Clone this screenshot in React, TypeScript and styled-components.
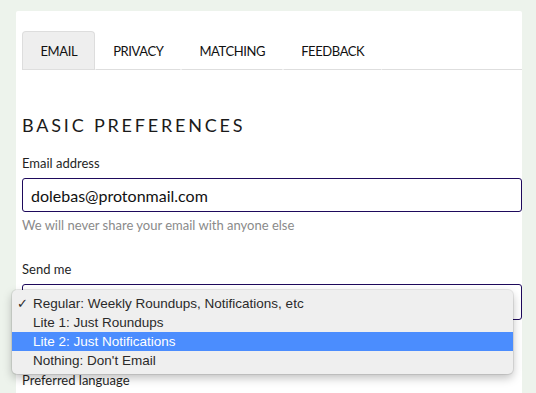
import React from "react";
import styled, { createGlobalStyle } from "styled-components";

const GlobalStyle = createGlobalStyle`
  html, body {
    margin: 0;
    padding: 0;
    background: #edf3ec;
    overflow: hidden;
  }
  body {
    font-family: Lato, "Open Sans", sans-serif;
    color: #1f1f1f;
  }
`;

const tabs = ["Email", "Privacy", "Matching", "Feedback"];
const sendOptions = [
  "Regular: Weekly Roundups, Notifications, etc",
  "Lite 1: Just Roundups",
  "Lite 2: Just Notifications",
  "Nothing: Don't Email",
];

function App() {
  const selected = 0;
  const hovered = 2;

  return (
    <>
      <GlobalStyle />
      <Styled_page_div>
        <Styled_card_section>
          <Styled_tabs_nav>
            {tabs.map((eachTab, index) => (
              <Styled_tab_button key={eachTab} $active={index === 0}>
                {eachTab}
              </Styled_tab_button>
            ))}
          </Styled_tabs_nav>

          <Styled_heading_h2>Basic Preferences</Styled_heading_h2>

          <Styled_field_div>
            <label>Email address</label>
            <Styled_input defaultValue="dolebas@protonmail.com" />
            <small>We will never share your email with anyone else</small>
          </Styled_field_div>

          <Styled_field_div className="send_me">
            <label>Send me</label>
            <Styled_select_div>
              <Styled_menu_ul>
                {sendOptions.map((eachOption, index) => (
                  <Styled_option_li key={eachOption} $highlighted={index === hovered}>
                    <span className="check">{index === selected ? "✓" : ""}</span>
                    {eachOption}
                  </Styled_option_li>
                ))}
              </Styled_menu_ul>
            </Styled_select_div>
          </Styled_field_div>

          <Styled_field_div className="language">
            <label>Preferred language</label>
          </Styled_field_div>
        </Styled_card_section>
      </Styled_page_div>
    </>
  );
}

const Styled_page_div = styled.div`
  padding: 11px 14px 0 16px;
  height: 393px;
  box-sizing: border-box;
`;

const Styled_card_section = styled.section`
  background: #ffffff;
  border-radius: 2px 2px 0 0;
  padding: 20px 0 40px 6px;
  height: 100%;
  box-sizing: border-box;
`;

const Styled_tabs_nav = styled.nav`
  display: flex;
  border-bottom: 1px solid #dedede;
`;

const Styled_tab_button = styled.button<{ $active: boolean }>`
  height: 39px;
  padding: 0 16.5px 0 17.5px;
  margin-bottom: -1px;
  border: 1px solid ${(p) => (p.$active ? "#dddddd" : "transparent")};
  border-bottom: 1px solid #dedede;
  border-radius: 4px 4px 0 0;
  background: ${(p) => (p.$active ? "#eeeeee" : "#ffffff")};
  font-family: Lato, sans-serif;
  font-size: 13px;
  letter-spacing: -0.4px;
  text-transform: uppercase;
  color: #111;
  cursor: pointer;
`;

const Styled_heading_h2 = styled.h2`
  margin: 43px 0 0;
  font-size: 18px;
  font-weight: 400;
  letter-spacing: 2.8px;
  text-transform: uppercase;
  line-height: 24px;
  color: #1a1a1a;
`;

const Styled_field_div = styled.div`
  display: flex;
  flex-direction: column;
  margin-top: 17px;

  & > label {
    font-size: 13px;
    line-height: 18px;
    color: #1f1f1f;
    margin-bottom: 6px;
  }
  & > small {
    margin-top: 5px;
    font-size: 13px;
    line-height: 16px;
    color: #8a8a8a;
  }
  &.send_me {
    margin-top: 27px;
  }
  &.language {
    margin-top: 51px;
  }
`;

const Styled_input = styled.input`
  height: 34px;
  box-sizing: border-box;
  border: 1px solid #1e0a5c;
  border-radius: 3px;
  padding: 0 8px;
  font-family: Lato, sans-serif;
  font-size: 16px;
  color: #111;
  outline: none;
`;

const Styled_select_div = styled.div`
  position: relative;
  height: 36px;
  box-sizing: border-box;
  border: 1px solid #1e0a5c;
  border-radius: 3px;
  background: #fff;
`;

const Styled_menu_ul = styled.ul`
  position: absolute;
  top: 5px;
  left: -11px;
  width: 501px;
  margin: 0;
  padding: 4px 0;
  list-style: none;
  background: #efefef;
  border-radius: 5px;
  box-shadow: 0 0 0 1px rgba(0, 0, 0, 0.08), 0 4px 10px rgba(0, 0, 0, 0.25);
  z-index: 2;
`;

const Styled_option_li = styled.li<{ $highlighted: boolean }>`
  display: flex;
  align-items: center;
  height: 19px;
  padding-left: 5px;
  font-family: "Liberation Sans", Arial, sans-serif;
  font-size: 13.5px;
  color: ${(p) => (p.$highlighted ? "#ffffff" : "#2a2a2a")};
  background: ${(p) => (p.$highlighted ? "#4b8dfe" : "transparent")};

  & .check {
    width: 16px;
    font-family: "DejaVu Sans", sans-serif;
    font-size: 13px;
  }
`;

export default App;
